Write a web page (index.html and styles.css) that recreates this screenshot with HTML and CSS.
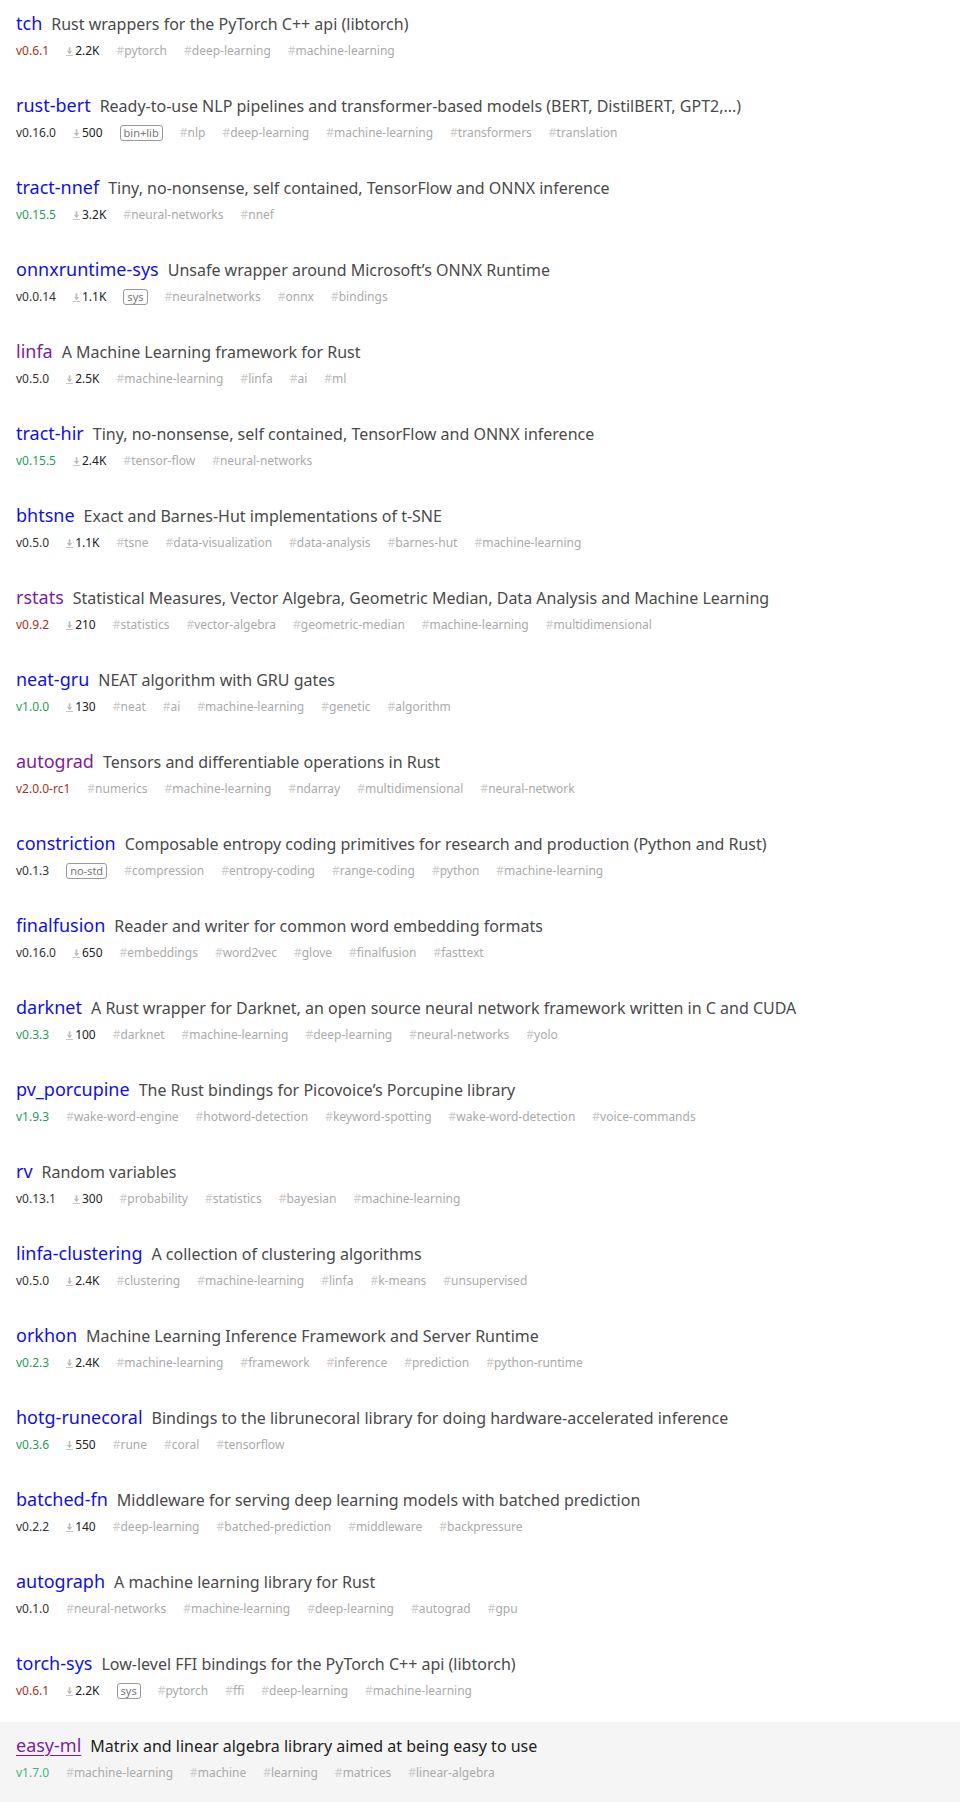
FILE: index.html
```html
<!DOCTYPE html>
<html lang="en">
<head>
<meta charset="utf-8">
<title>Machine learning crates</title>
<link rel="stylesheet" href="styles.css">
</head>
<body>
<ul class="crates">
  <li class="crate">
    <div class="head"><a class="name" href="#">tch</a><span class="desc">Rust wrappers for the PyTorch C++ api (libtorch)</span></div>
    <div class="meta"><span class="ver stale">v0.6.1</span><span class="dl"><svg class="dl-ico" viewBox="0 0 8 10"><path d="M3 0h2v4.5h2L4 8 1 4.5h2z"/><rect x="0" y="9" width="8" height="1"/></svg>2.2K</span><span class="tag"><i>#</i>pytorch</span><span class="tag"><i>#</i>deep-learning</span><span class="tag"><i>#</i>machine-learning</span></div>
  </li>
  <li class="crate">
    <div class="head"><a class="name" href="#">rust-bert</a><span class="desc">Ready-to-use NLP pipelines and transformer-based models (BERT, DistilBERT, GPT2,...)</span></div>
    <div class="meta"><span class="ver">v0.16.0</span><span class="dl"><svg class="dl-ico" viewBox="0 0 8 10"><path d="M3 0h2v4.5h2L4 8 1 4.5h2z"/><rect x="0" y="9" width="8" height="1"/></svg>500</span><span class="badge">bin+lib</span><span class="tag"><i>#</i>nlp</span><span class="tag"><i>#</i>deep-learning</span><span class="tag"><i>#</i>machine-learning</span><span class="tag"><i>#</i>transformers</span><span class="tag"><i>#</i>translation</span></div>
  </li>
  <li class="crate">
    <div class="head"><a class="name" href="#">tract-nnef</a><span class="desc">Tiny, no-nonsense, self contained, TensorFlow and ONNX inference</span></div>
    <div class="meta"><span class="ver fresh">v0.15.5</span><span class="dl"><svg class="dl-ico" viewBox="0 0 8 10"><path d="M3 0h2v4.5h2L4 8 1 4.5h2z"/><rect x="0" y="9" width="8" height="1"/></svg>3.2K</span><span class="tag"><i>#</i>neural-networks</span><span class="tag"><i>#</i>nnef</span></div>
  </li>
  <li class="crate">
    <div class="head"><a class="name" href="#">onnxruntime-sys</a><span class="desc">Unsafe wrapper around Microsoft’s ONNX Runtime</span></div>
    <div class="meta"><span class="ver">v0.0.14</span><span class="dl"><svg class="dl-ico" viewBox="0 0 8 10"><path d="M3 0h2v4.5h2L4 8 1 4.5h2z"/><rect x="0" y="9" width="8" height="1"/></svg>1.1K</span><span class="badge">sys</span><span class="tag"><i>#</i>neuralnetworks</span><span class="tag"><i>#</i>onnx</span><span class="tag"><i>#</i>bindings</span></div>
  </li>
  <li class="crate">
    <div class="head"><a class="name visited" href="#">linfa</a><span class="desc">A Machine Learning framework for Rust</span></div>
    <div class="meta"><span class="ver">v0.5.0</span><span class="dl"><svg class="dl-ico" viewBox="0 0 8 10"><path d="M3 0h2v4.5h2L4 8 1 4.5h2z"/><rect x="0" y="9" width="8" height="1"/></svg>2.5K</span><span class="tag"><i>#</i>machine-learning</span><span class="tag"><i>#</i>linfa</span><span class="tag"><i>#</i>ai</span><span class="tag"><i>#</i>ml</span></div>
  </li>
  <li class="crate">
    <div class="head"><a class="name" href="#">tract-hir</a><span class="desc">Tiny, no-nonsense, self contained, TensorFlow and ONNX inference</span></div>
    <div class="meta"><span class="ver fresh">v0.15.5</span><span class="dl"><svg class="dl-ico" viewBox="0 0 8 10"><path d="M3 0h2v4.5h2L4 8 1 4.5h2z"/><rect x="0" y="9" width="8" height="1"/></svg>2.4K</span><span class="tag"><i>#</i>tensor-flow</span><span class="tag"><i>#</i>neural-networks</span></div>
  </li>
  <li class="crate">
    <div class="head"><a class="name" href="#">bhtsne</a><span class="desc">Exact and Barnes-Hut implementations of t-SNE</span></div>
    <div class="meta"><span class="ver">v0.5.0</span><span class="dl"><svg class="dl-ico" viewBox="0 0 8 10"><path d="M3 0h2v4.5h2L4 8 1 4.5h2z"/><rect x="0" y="9" width="8" height="1"/></svg>1.1K</span><span class="tag"><i>#</i>tsne</span><span class="tag"><i>#</i>data-visualization</span><span class="tag"><i>#</i>data-analysis</span><span class="tag"><i>#</i>barnes-hut</span><span class="tag"><i>#</i>machine-learning</span></div>
  </li>
  <li class="crate">
    <div class="head"><a class="name visited" href="#">rstats</a><span class="desc">Statistical Measures, Vector Algebra, Geometric Median, Data Analysis and Machine Learning</span></div>
    <div class="meta"><span class="ver stale">v0.9.2</span><span class="dl"><svg class="dl-ico" viewBox="0 0 8 10"><path d="M3 0h2v4.5h2L4 8 1 4.5h2z"/><rect x="0" y="9" width="8" height="1"/></svg>210</span><span class="tag"><i>#</i>statistics</span><span class="tag"><i>#</i>vector-algebra</span><span class="tag"><i>#</i>geometric-median</span><span class="tag"><i>#</i>machine-learning</span><span class="tag"><i>#</i>multidimensional</span></div>
  </li>
  <li class="crate">
    <div class="head"><a class="name" href="#">neat-gru</a><span class="desc">NEAT algorithm with GRU gates</span></div>
    <div class="meta"><span class="ver fresh">v1.0.0</span><span class="dl"><svg class="dl-ico" viewBox="0 0 8 10"><path d="M3 0h2v4.5h2L4 8 1 4.5h2z"/><rect x="0" y="9" width="8" height="1"/></svg>130</span><span class="tag"><i>#</i>neat</span><span class="tag"><i>#</i>ai</span><span class="tag"><i>#</i>machine-learning</span><span class="tag"><i>#</i>genetic</span><span class="tag"><i>#</i>algorithm</span></div>
  </li>
  <li class="crate">
    <div class="head"><a class="name visited" href="#">autograd</a><span class="desc">Tensors and differentiable operations in Rust</span></div>
    <div class="meta"><span class="ver stale">v2.0.0-rc1</span><span class="tag"><i>#</i>numerics</span><span class="tag"><i>#</i>machine-learning</span><span class="tag"><i>#</i>ndarray</span><span class="tag"><i>#</i>multidimensional</span><span class="tag"><i>#</i>neural-network</span></div>
  </li>
  <li class="crate">
    <div class="head"><a class="name" href="#">constriction</a><span class="desc">Composable entropy coding primitives for research and production (Python and Rust)</span></div>
    <div class="meta"><span class="ver">v0.1.3</span><span class="badge">no-std</span><span class="tag"><i>#</i>compression</span><span class="tag"><i>#</i>entropy-coding</span><span class="tag"><i>#</i>range-coding</span><span class="tag"><i>#</i>python</span><span class="tag"><i>#</i>machine-learning</span></div>
  </li>
  <li class="crate">
    <div class="head"><a class="name" href="#">finalfusion</a><span class="desc">Reader and writer for common word embedding formats</span></div>
    <div class="meta"><span class="ver">v0.16.0</span><span class="dl"><svg class="dl-ico" viewBox="0 0 8 10"><path d="M3 0h2v4.5h2L4 8 1 4.5h2z"/><rect x="0" y="9" width="8" height="1"/></svg>650</span><span class="tag"><i>#</i>embeddings</span><span class="tag"><i>#</i>word2vec</span><span class="tag"><i>#</i>glove</span><span class="tag"><i>#</i>finalfusion</span><span class="tag"><i>#</i>fasttext</span></div>
  </li>
  <li class="crate">
    <div class="head"><a class="name" href="#">darknet</a><span class="desc">A Rust wrapper for Darknet, an open source neural network framework written in C and CUDA</span></div>
    <div class="meta"><span class="ver fresh">v0.3.3</span><span class="dl"><svg class="dl-ico" viewBox="0 0 8 10"><path d="M3 0h2v4.5h2L4 8 1 4.5h2z"/><rect x="0" y="9" width="8" height="1"/></svg>100</span><span class="tag"><i>#</i>darknet</span><span class="tag"><i>#</i>machine-learning</span><span class="tag"><i>#</i>deep-learning</span><span class="tag"><i>#</i>neural-networks</span><span class="tag"><i>#</i>yolo</span></div>
  </li>
  <li class="crate">
    <div class="head"><a class="name" href="#">pv_porcupine</a><span class="desc">The Rust bindings for Picovoice’s Porcupine library</span></div>
    <div class="meta"><span class="ver fresh">v1.9.3</span><span class="tag"><i>#</i>wake-word-engine</span><span class="tag"><i>#</i>hotword-detection</span><span class="tag"><i>#</i>keyword-spotting</span><span class="tag"><i>#</i>wake-word-detection</span><span class="tag"><i>#</i>voice-commands</span></div>
  </li>
  <li class="crate">
    <div class="head"><a class="name" href="#">rv</a><span class="desc">Random variables</span></div>
    <div class="meta"><span class="ver">v0.13.1</span><span class="dl"><svg class="dl-ico" viewBox="0 0 8 10"><path d="M3 0h2v4.5h2L4 8 1 4.5h2z"/><rect x="0" y="9" width="8" height="1"/></svg>300</span><span class="tag"><i>#</i>probability</span><span class="tag"><i>#</i>statistics</span><span class="tag"><i>#</i>bayesian</span><span class="tag"><i>#</i>machine-learning</span></div>
  </li>
  <li class="crate">
    <div class="head"><a class="name" href="#">linfa-clustering</a><span class="desc">A collection of clustering algorithms</span></div>
    <div class="meta"><span class="ver">v0.5.0</span><span class="dl"><svg class="dl-ico" viewBox="0 0 8 10"><path d="M3 0h2v4.5h2L4 8 1 4.5h2z"/><rect x="0" y="9" width="8" height="1"/></svg>2.4K</span><span class="tag"><i>#</i>clustering</span><span class="tag"><i>#</i>machine-learning</span><span class="tag"><i>#</i>linfa</span><span class="tag"><i>#</i>k-means</span><span class="tag"><i>#</i>unsupervised</span></div>
  </li>
  <li class="crate">
    <div class="head"><a class="name" href="#">orkhon</a><span class="desc">Machine Learning Inference Framework and Server Runtime</span></div>
    <div class="meta"><span class="ver fresh">v0.2.3</span><span class="dl"><svg class="dl-ico" viewBox="0 0 8 10"><path d="M3 0h2v4.5h2L4 8 1 4.5h2z"/><rect x="0" y="9" width="8" height="1"/></svg>2.4K</span><span class="tag"><i>#</i>machine-learning</span><span class="tag"><i>#</i>framework</span><span class="tag"><i>#</i>inference</span><span class="tag"><i>#</i>prediction</span><span class="tag"><i>#</i>python-runtime</span></div>
  </li>
  <li class="crate">
    <div class="head"><a class="name" href="#">hotg-runecoral</a><span class="desc">Bindings to the librunecoral library for doing hardware-accelerated inference</span></div>
    <div class="meta"><span class="ver fresh">v0.3.6</span><span class="dl"><svg class="dl-ico" viewBox="0 0 8 10"><path d="M3 0h2v4.5h2L4 8 1 4.5h2z"/><rect x="0" y="9" width="8" height="1"/></svg>550</span><span class="tag"><i>#</i>rune</span><span class="tag"><i>#</i>coral</span><span class="tag"><i>#</i>tensorflow</span></div>
  </li>
  <li class="crate">
    <div class="head"><a class="name" href="#">batched-fn</a><span class="desc">Middleware for serving deep learning models with batched prediction</span></div>
    <div class="meta"><span class="ver">v0.2.2</span><span class="dl"><svg class="dl-ico" viewBox="0 0 8 10"><path d="M3 0h2v4.5h2L4 8 1 4.5h2z"/><rect x="0" y="9" width="8" height="1"/></svg>140</span><span class="tag"><i>#</i>deep-learning</span><span class="tag"><i>#</i>batched-prediction</span><span class="tag"><i>#</i>middleware</span><span class="tag"><i>#</i>backpressure</span></div>
  </li>
  <li class="crate">
    <div class="head"><a class="name" href="#">autograph</a><span class="desc">A machine learning library for Rust</span></div>
    <div class="meta"><span class="ver">v0.1.0</span><span class="tag"><i>#</i>neural-networks</span><span class="tag"><i>#</i>machine-learning</span><span class="tag"><i>#</i>deep-learning</span><span class="tag"><i>#</i>autograd</span><span class="tag"><i>#</i>gpu</span></div>
  </li>
  <li class="crate">
    <div class="head"><a class="name" href="#">torch-sys</a><span class="desc">Low-level FFI bindings for the PyTorch C++ api (libtorch)</span></div>
    <div class="meta"><span class="ver stale">v0.6.1</span><span class="dl"><svg class="dl-ico" viewBox="0 0 8 10"><path d="M3 0h2v4.5h2L4 8 1 4.5h2z"/><rect x="0" y="9" width="8" height="1"/></svg>2.2K</span><span class="badge">sys</span><span class="tag"><i>#</i>pytorch</span><span class="tag"><i>#</i>ffi</span><span class="tag"><i>#</i>deep-learning</span><span class="tag"><i>#</i>machine-learning</span></div>
  </li>
  <li class="crate hover">
    <div class="head"><a class="name visited" href="#">easy-ml</a><span class="desc">Matrix and linear algebra library aimed at being easy to use</span></div>
    <div class="meta"><span class="ver fresh">v1.7.0</span><span class="tag"><i>#</i>machine-learning</span><span class="tag"><i>#</i>machine</span><span class="tag"><i>#</i>learning</span><span class="tag"><i>#</i>matrices</span><span class="tag"><i>#</i>linear-algebra</span></div>
  </li>
</ul>
</body>
</html>
```
FILE: styles.css
```css
html, body {
  margin: 0;
  padding: 0;
  background: #fff;
}
body {
  font-family: "Noto Sans", "Open Sans", sans-serif;
  color: #444;
}
.crates {
  list-style: none;
  margin: 0;
  padding: 0;
}
.crate {
  height: 82px;
  box-sizing: border-box;
  padding: 12px 16px 0;
}
.crate.hover {
  background: #f5f5f5;
}
.head {
  height: 22px;
  font-size: 16px;
  line-height: 22px;
  white-space: nowrap;
}
.name {
  font-size: 18px;
  color: #1111dd;
  text-decoration: none;
  margin-right: 9px;
}
.name.visited {
  color: #7a1ea0;
}
.hover .name {
  text-decoration: underline;
  text-decoration-thickness: 1px;
  text-underline-offset: 3px;
}
.desc {
  color: #4a4a4a;
}
.hover .desc {
  color: #222;
}
.meta {
  display: flex;
  align-items: baseline;
  gap: 17px;
  margin-top: 8px;
  font-size: 12px;
  line-height: 18px;
  white-space: nowrap;
}
.ver {
  color: #333;
}
.ver.stale {
  color: #a3331c;
}
.ver.fresh {
  color: #1f9d5c;
}
.hover .ver.fresh {
  color: #43b383;
}
.dl {
  color: #222;
  display: inline-flex;
  align-items: baseline;
  gap: 2px;
}
.dl-ico {
  width: 7px;
  height: 9px;
  fill: #bdbdbd;
  align-self: center;
}
.badge {
  font-size: 11px;
  line-height: 14px;
  color: #777;
  border: 1px solid #999;
  border-radius: 3px;
  padding: 0 3px;
}
.tag {
  color: #aaa;
}
.tag i {
  font-style: normal;
  color: #ccc;
}
```
